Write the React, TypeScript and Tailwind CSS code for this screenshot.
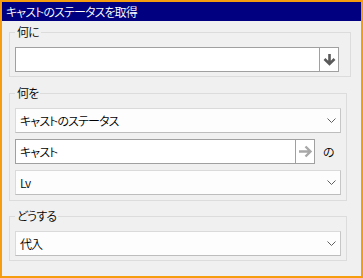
import React from 'react';

const font = { fontFamily: '"Noto Sans CJK JP", "Noto Sans", sans-serif', fontFeatureSettings: '"palt"' };

function Chevron() {
  return (
    <svg width="9" height="5" viewBox="0 0 9 5" className="shrink-0">
      <path d="M0.5 0.5 L4.5 4.5 L8.5 0.5" fill="none" stroke="#606060" strokeWidth="1" />
    </svg>
  );
}

function Select({ value }: { value: string }) {
  return (
    <div className="flex h-[25px] w-[326px] items-center justify-between border border-[#dadada] border-b-[#bdbdbd] border-r-[#c6c6c6] bg-[#fdfdfd] pl-[4px] pr-[4px] text-[12px] text-black">
      <span className="tracking-[-0.9px]">{value}</span>
      <Chevron />
    </div>
  );
}

function Group({ label, className, children }: { label: string; className: string; children: React.ReactNode }) {
  return (
    <div className={`relative ml-[7px] border border-[#dcdcdc] pl-[5px] pt-[14px] ${className}`}>
      <span className="absolute left-[5px] top-[-10px] bg-[#f0f0f0] px-[2px] text-[12px] leading-[18px] tracking-[-0.9px] text-black">{label}</span>
      {children}
    </div>
  );
}

export default function App() {
  return (
    <div className="flex h-[278px] w-[363px] flex-col border-2 border-[#f59c0f] bg-[#f0f0f0] font-[350]" style={font}>
      <div className="flex h-[19px] items-center bg-[#000080] pl-[4px] text-[12px] tracking-[-0.9px] text-white">キャストのステータスを取得</div>

      <Group label="何に" className="mt-[11px] h-[45px] w-[342px]">
        <div className="flex h-[25px] w-[324px] border border-[#a0a0a0] bg-white">
          <div className="flex-1" />
          <div className="flex w-[19px] items-center justify-center border-l border-[#a0a0a0]">
            <svg width="13" height="13" viewBox="0 0 13 13">
              <path d="M6.5 1 V11 M1.5 6 L6.5 11 L11.5 6" fill="none" stroke="#5a5a5a" strokeWidth="2.6" />
            </svg>
          </div>
        </div>
      </Group>

      <Group label="何を" className="mt-[16px] h-[108px] w-[338px]">
        <div className="flex flex-col gap-[6px]">
          <Select value="キャストのステータス" />
          <div className="flex items-center">
            <div className="flex h-[25px] w-[300px] border border-[#a0a0a0] bg-white">
              <div className="flex flex-1 items-center pl-[4px] text-[12px] tracking-[-0.9px] text-black">キャスト</div>
              <div className="flex w-[19px] items-center justify-center border-l border-[#a0a0a0]">
                <svg width="15" height="13" viewBox="0 0 15 13">
                  <path d="M1 6.5 H13 M7.5 1.5 L12.5 6.5 L7.5 11.5" fill="none" stroke="#a8a8a8" strokeWidth="2.4" />
                </svg>
              </div>
            </div>
            <span className="ml-[8px] text-[12px] text-black">の</span>
          </div>
          <Select value="Lv" />
        </div>
      </Group>

      <Group label="どうする" className="mt-[15px] h-[45px] w-[338px]">
        <Select value="代入" />
      </Group>
    </div>
  );
}
